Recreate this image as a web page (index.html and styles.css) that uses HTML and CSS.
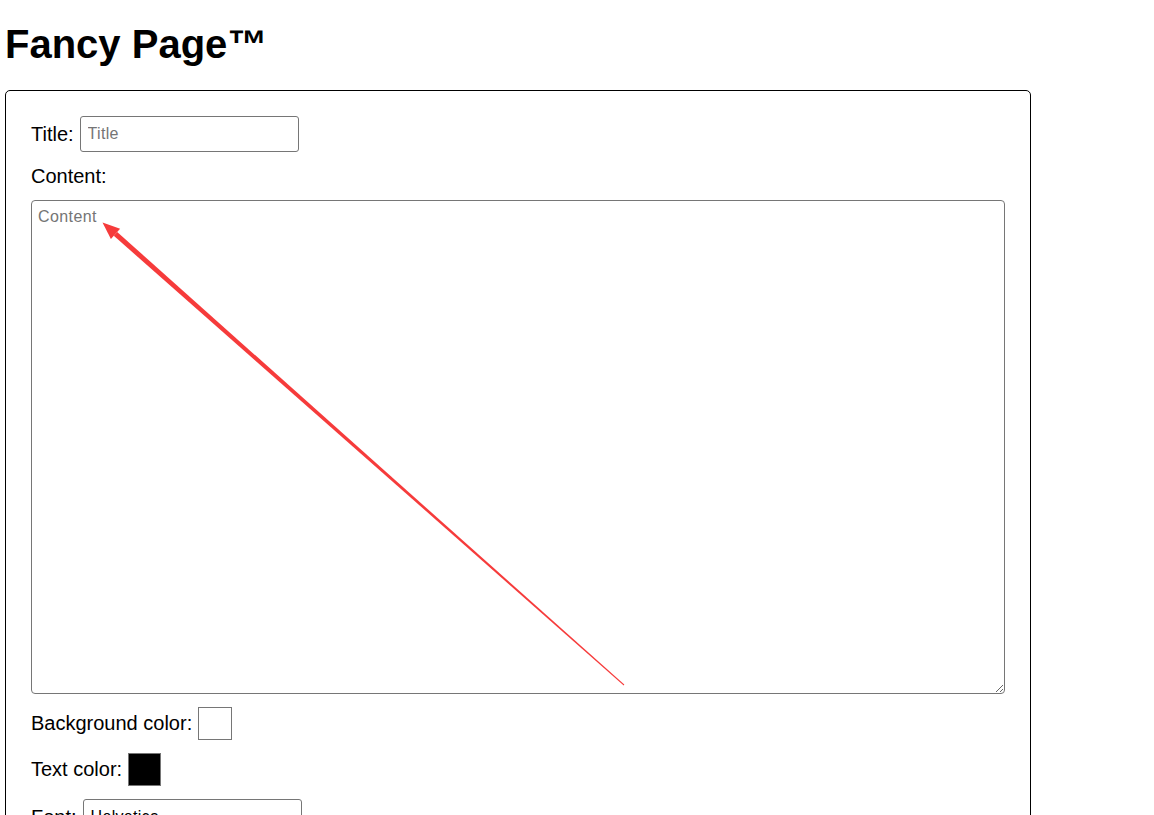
FILE: index.html
```html
<!DOCTYPE html>
<html lang="en">
<head>
<meta charset="utf-8">
<title>Fancy Page™</title>
<link rel="stylesheet" href="styles.css">
</head>
<body>
<div class="page">
  <h1 class="title">Fancy Page™</h1>
  <form class="panel">
    <div class="row">
      <label class="label" for="t">Title:</label>
      <input class="field" id="t" type="text" placeholder="Title">
    </div>
    <div class="row">
      <label class="label" for="c">Content:</label>
    </div>
    <div class="row">
      <textarea class="content" id="c" placeholder="Content"></textarea>
    </div>
    <div class="row">
      <label class="label" for="bg">Background color:</label>
      <input class="swatch swatch-bg" id="bg" type="color" value="#ffffff">
    </div>
    <div class="row">
      <label class="label" for="fg">Text color:</label>
      <input class="swatch swatch-fg" id="fg" type="color" value="#000000">
    </div>
    <div class="row">
      <label class="label" for="f">Font:</label>
      <input class="field" id="f" type="text" value="Helvetica">
    </div>
  </form>
</div>
<svg class="annotation" width="1154" height="815" viewBox="0 0 1154 815" aria-hidden="true">
  <polygon fill="#f63b3b" points="117.2,232.0 624.3,684.6 623.7,685.4 113.8,235.8"/>
  <polygon fill="#f63b3b" points="102.5,222.5 120.1,228.7 110.9,239.1"/>
</svg>
</body>
</html>
```

FILE: styles.css
```css
html, body {
  margin: 0;
  padding: 0;
  background: #ffffff;
}

body {
  position: relative;
  font-family: "Liberation Sans", Arial, sans-serif;
  color: #000000;
}

.page {
  padding: 0 5px;
}

.title {
  margin: 21px 0 23px 0;
  font-size: 40px;
  font-weight: bold;
  line-height: 46px;
}

.panel {
  width: 1026px;
  box-sizing: border-box;
  border: 1px solid #000000;
  border-radius: 5px;
  padding: 25px 25px 40px 25px;
}

.row {
  display: flex;
  align-items: center;
  gap: 6px;
  margin-bottom: 13px;
}

.label {
  font-size: 20px;
  line-height: 23px;
}

.field {
  box-sizing: border-box;
  width: 219px;
  height: 36px;
  padding: 8px 7px;
  border: 1px solid #767676;
  border-radius: 3px;
  font-family: "Liberation Sans", Arial, sans-serif;
  font-size: 16px;
  letter-spacing: 0.3px;
  color: #000000;
  background: #ffffff;
}

.field::placeholder,
.content::placeholder {
  color: #757575;
}

.content {
  box-sizing: border-box;
  width: 974px;
  height: 494px;
  margin-top: -1px;
  padding: 7px 6px 6px 6px;
  border: 1px solid #767676;
  border-radius: 4px;
  font-family: "Liberation Sans", Arial, sans-serif;
  font-size: 16px;
  letter-spacing: 0.4px;
  line-height: 18px;
  display: block;
}

.swatch {
  -webkit-appearance: none;
  appearance: none;
  box-sizing: border-box;
  width: 34px;
  height: 33px;
  padding: 0;
  border: 1px solid #767676;
  background: #ffffff;
}

.swatch::-webkit-color-swatch-wrapper {
  padding: 0;
}

.swatch::-webkit-color-swatch {
  border: none;
}

.swatch-fg {
  width: 33px;
}

.annotation {
  position: absolute;
  top: 0;
  left: 0;
  pointer-events: none;
}
```
